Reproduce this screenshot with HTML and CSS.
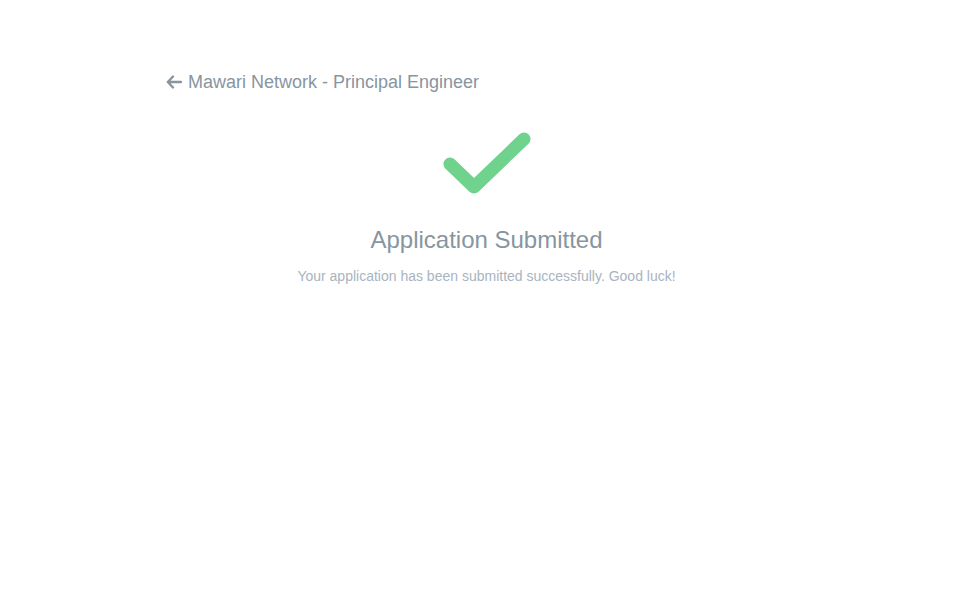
FILE: index.html
```html
<!DOCTYPE html>
<html>
<head>
<meta charset="utf-8">
<link rel="stylesheet" href="styles.css">
</head>
<body>
<div class="page">
  <a class="back" href="#">
    <svg class="arrow" width="16" height="14" viewBox="0 0 16 14"><path d="M7 1.5 L1.8 7 L7 12.5 M2 7 H15" fill="none" stroke="#8795a1" stroke-width="2.4" stroke-linecap="round" stroke-linejoin="round"/></svg>
    <span>Mawari Network - Principal Engineer</span>
  </a>
  <div class="done">
    <svg class="check" width="100" height="76" viewBox="0 0 100 76"><path d="M13 37 L37 60 L87 12" fill="none" stroke="#6fd38e" stroke-width="13" stroke-linecap="round" stroke-linejoin="round"/></svg>
    <h1 class="title">Application Submitted</h1>
    <p class="sub">Your application has been submitted successfully. Good luck!</p>
  </div>
</div>
</body>
</html>
```
FILE: styles.css
```css
html, body { margin: 0; padding: 0; background: #fff; }
body { font-family: "Liberation Sans", Arial, sans-serif; }
.page { width: 641px; margin-left: 166px; padding-top: 71px; }
.back { display: flex; align-items: center; gap: 6px; color: #8795a1; text-decoration: none; font-size: 18px; line-height: 22px; }
.arrow { flex: none; }
.done { display: flex; flex-direction: column; align-items: center; margin-top: 34px; }
.check { display: block; }
.title { margin: 23px 0 0; font-weight: normal; font-size: 24px; line-height: 28px; color: #8795a1; }
.sub { margin: 13px 0 0; font-size: 14px; line-height: 18px; color: #a9b4bf; }
```
